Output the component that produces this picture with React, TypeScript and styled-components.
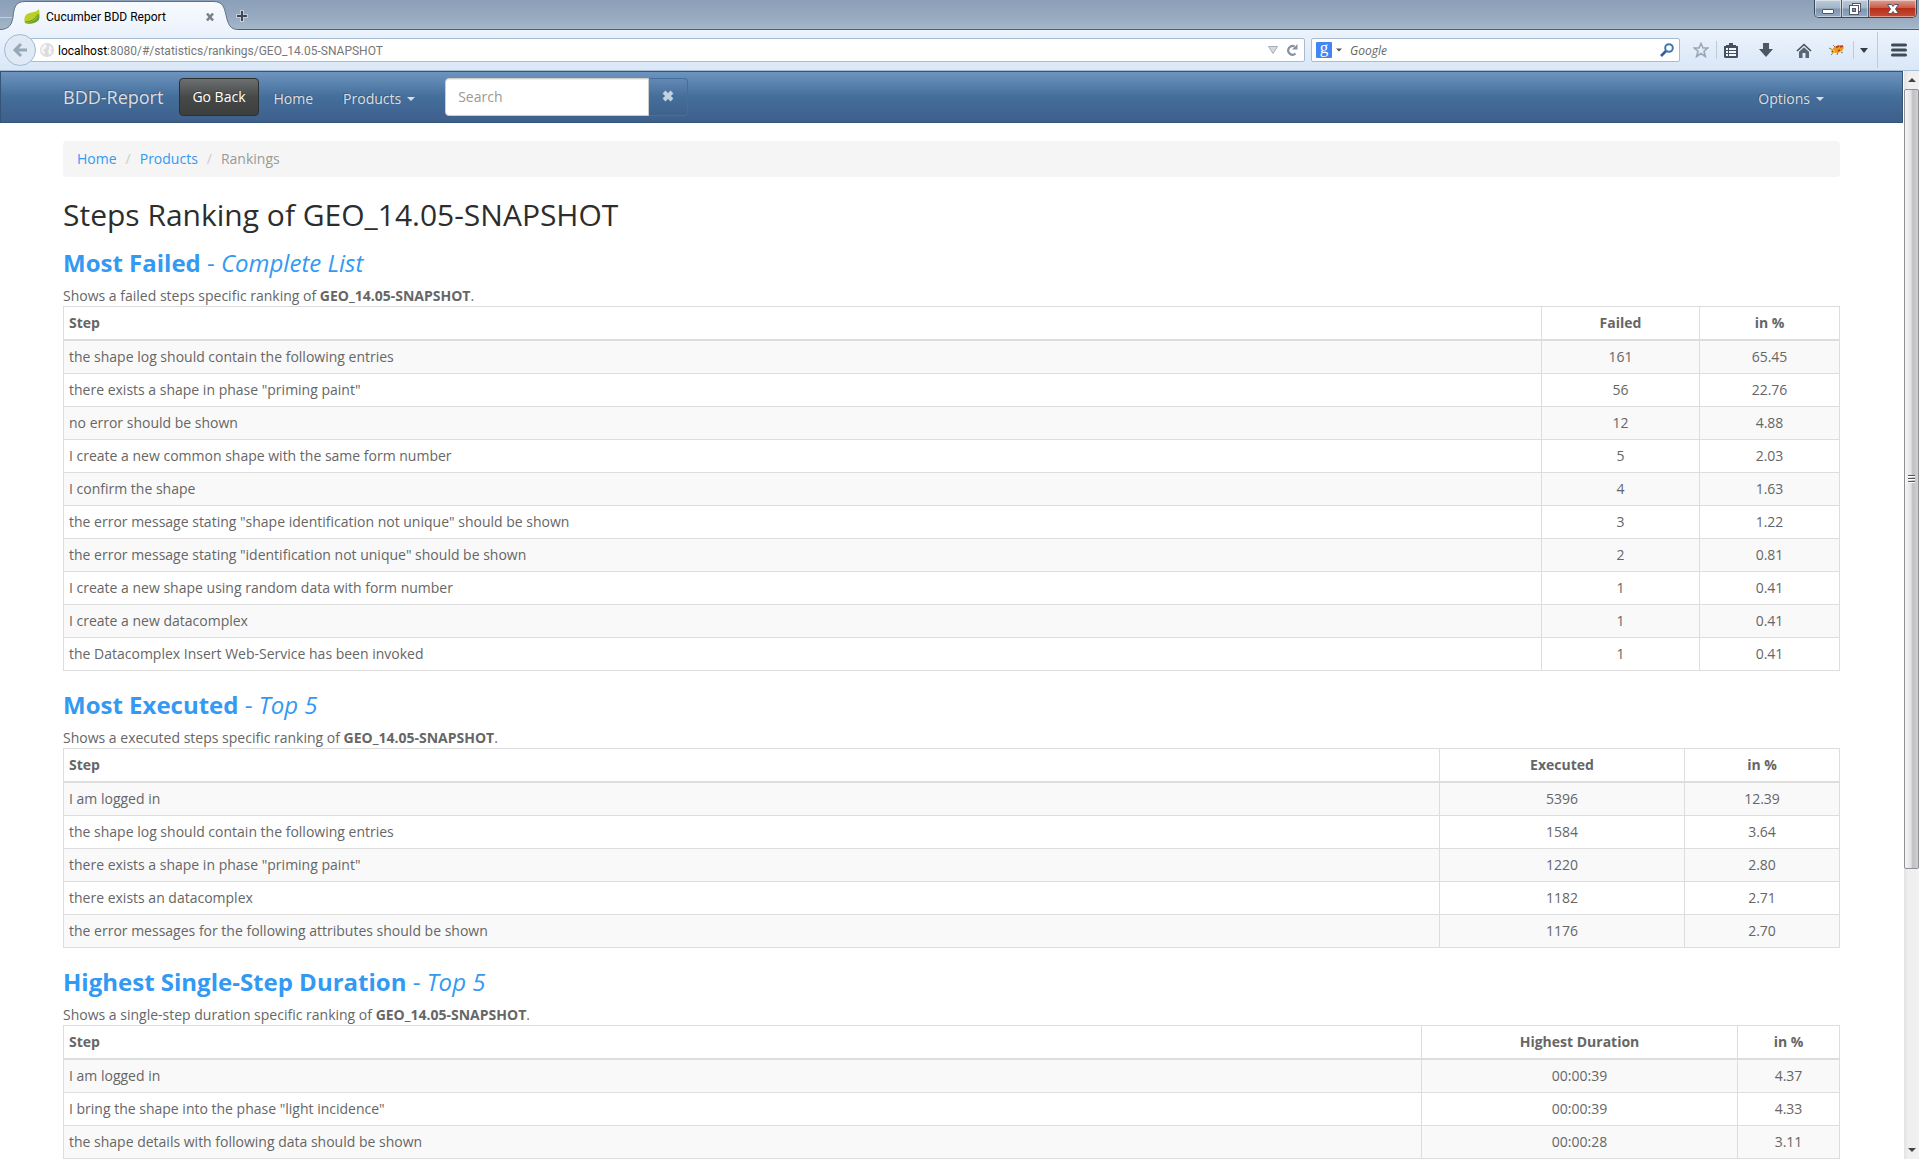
import React from 'react';
import styled, { createGlobalStyle, css } from 'styled-components';

const GlobalStyle = createGlobalStyle`
  *, *::before, *::after { box-sizing: border-box; }
  html, body, #root { height: 100%; }
  body {
    margin: 0;
    overflow: hidden;
    background: #fff;
    color: #666;
    font: 14px/20px "Open Sans", "Noto Sans", sans-serif;
  }
  button, input { font: inherit; margin: 0; }
  a { color: #3399f3; text-decoration: none; }
`;

const Window = styled.div`
  display: flex;
  flex-direction: column;
  height: 100vh;
`;

/* ---------- browser chrome ---------- */

const TitleBar = styled.header`
  display: flex;
  flex: none;
  align-items: flex-start;
  height: 30px;
  border-bottom: 1px solid #4c6274;
  background:
    radial-gradient(ellipse at 0 60%, #ccd9ea 0, rgba(204, 217, 234, 0) 60px),
    radial-gradient(ellipse at 100% 100%, #c3d6ea 0, rgba(195, 214, 234, 0) 50px),
    linear-gradient(#8b9fb9, #98aac0 60%, #a5b8c9);
`;

const Tab = styled.div`
  position: relative;
  display: flex;
  align-items: center;
  width: 236px;
  height: 30px;
  padding: 3px 21px 0 24px;
  color: #000;
  font: 12px/16px Roboto, "Open Sans", sans-serif;
`;

const TabShape = styled.svg`
  position: absolute;
  inset: 0;
`;

const TabIcon = styled.svg`
  position: relative;
  margin-right: 6px;
`;

const TabTitle = styled.span`
  position: relative;
  flex: 1;
  white-space: nowrap;
`;

const BareButton = styled.button`
  position: relative;
  display: flex;
  align-items: center;
  justify-content: center;
  padding: 0;
  border: 0;
  background: none;
  color: inherit;
`;

const NewTab = styled(BareButton)`
  width: 12px;
  height: 30px;
  padding-top: 2px;
`;

const WindowControls = styled.div`
  display: flex;
  height: 18px;
  margin-left: auto;
  margin-right: 2px;
  overflow: hidden;
  border: 1px solid #3a4858;
  border-top: 0;
  border-radius: 0 0 5px 5px;
`;

const ControlButton = styled(BareButton)<{ $close?: boolean }>`
  width: ${p => (p.$close ? 47 : 27)}px;
  height: 17px;
  box-shadow: inset 0 0 0 1px rgba(255, 255, 255, 0.45);
  background: linear-gradient(#bccada, #a3b5c9 48%, #7f95ae 52%, #94aac2);
  ${p =>
    p.$close
      ? css`background: linear-gradient(#dba094, #cc5c47 45%, #b5301a 50%, #c84c36);`
      : css`border-right: 1px solid #4a5a6c;`}
`;

const Toolbar = styled.div`
  display: flex;
  flex: none;
  align-items: center;
  height: 41px;
  padding: 0 0 0 4px;
  border-bottom: 1px solid #a8bdd2;
  background: linear-gradient(#ecf3fc, #d9e7f8);
  font-size: 12px;
  line-height: 16px;
`;

const BackButton = styled(BareButton)`
  z-index: 1;
  flex: none;
  width: 32px;
  height: 32px;
  border: 1px solid #a3bad0;
  border-radius: 50%;
  background: #dfeaf6;
`;

const Field = styled.div`
  display: flex;
  align-items: center;
  height: 24px;
  border: 1px solid #a9bccf;
  border-radius: 2px;
  background: #fff;
`;

const AddressField = styled(Field)`
  flex: 1;
  gap: 8px;
  margin-left: -6px;
  padding: 0 6px 0 9px;
`;

const Url = styled.span`
  flex: 1;
  margin-left: -4px;
  padding-top: 2px;
  color: #777;
  font-family: Roboto, "Open Sans", sans-serif;
  white-space: nowrap;
`;

const Host = styled.span`
  color: #000;
`;

const SearchField = styled(Field)`
  width: 369px;
  margin-left: 6px;
  padding: 0 5px 0 4px;
`;

const SearchBox = styled.input`
  flex: 1;
  min-width: 0;
  padding: 2px 8px 0;
  border: 0;
  outline: 0;
  background: none;
  color: #333;
  &::placeholder { color: #666; font-style: italic; opacity: 1; }
`;

const EngineBadge = styled.span`
  width: 16px;
  height: 16px;
  margin-right: 4px;
  border-radius: 1px;
  background: #4285f4;
  color: #fff;
  font: 17px/12px "Liberation Serif", serif;
  text-align: center;
`;

const Tools = styled.div`
  display: flex;
  align-items: center;
  height: 100%;
  margin-left: 13px;
`;

const Tool = styled(BareButton)<{ $w: number }>`
  width: ${p => p.$w}px;
  height: 24px;
`;

const ToolDivider = styled.span<{ $tall?: boolean; $gap?: number }>`
  width: 1px;
  height: ${p => (p.$tall ? 36 : 18)}px;
  margin-left: ${p => p.$gap ?? 0}px;
  background: #bccbdb;
`;

/* ---------- page ---------- */

const Viewport = styled.div`
  display: flex;
  flex: 1;
  min-height: 0;
`;

const Page = styled.div`
  flex: 1;
  min-width: 0;
  overflow: hidden;
`;

const Navbar = styled.nav`
  display: flex;
  align-items: center;
  height: 52px;
  margin-right: 1px;
  padding: 0 78px 0 62px;
  border: 1px solid #345578;
  background: linear-gradient(#6d94bf, #446e9b 50%, #3e5f8c);
  text-shadow: -1px -1px 0 rgba(0, 0, 0, 0.2);
`;

const Brand = styled.a`
  margin-right: 16px;
  color: #ddd;
  font-size: 18px;
`;

const GoBack = styled.button`
  height: 38px;
  padding: 0 12px;
  border: 1px solid #2e2f2f;
  border-radius: 4px;
  background: linear-gradient(#6d7070, #474949 50%, #3d3f3f);
  color: #fff;
  text-shadow: inherit;
`;

const NavLink = styled.a`
  display: flex;
  align-items: center;
  gap: 6px;
  padding: 3px 15px 0;
  color: #ddd;
`;

const NavEnd = styled.div`
  margin-left: auto;
  margin-right: -15px;
`;

const Caret = styled.span`
  border: 4px solid transparent;
  border-top-color: currentColor;
  border-bottom: 0;
`;

const SearchForm = styled.form`
  display: flex;
  height: 38px;
  margin: 0 0 0 15px;
`;

const SearchInput = styled.input`
  width: 204px;
  padding: 8px 12px;
  border: 1px solid #ccc;
  border-radius: 4px 0 0 4px;
  outline: 0;
  background: #fff;
  color: #666;
  box-shadow: inset 0 1px 1px rgba(0, 0, 0, 0.075);
  &::placeholder { color: #999; opacity: 1; }
`;

const ClearButton = styled(BareButton)`
  width: 39px;
  padding-bottom: 2px;
  border: 1px solid #446e9b;
  border-left: 0;
  border-radius: 0 4px 4px 0;
  background: linear-gradient(#6488b5, #446e9b 50%, #3e628c);
`;

const Content = styled.main`
  margin: 18px 64px 0 63px;
`;

const Breadcrumb = styled.ol`
  display: flex;
  margin: 0;
  padding: 8px 14px;
  border-radius: 4px;
  background: #f5f5f5;
  color: #999;
  list-style: none;
`;

const Crumb = styled.li`
  & + &::before {
    content: '/';
    padding: 0 9px;
    color: #ccc;
  }
`;

const PageTitle = styled.h1`
  margin: 21px 0 18px;
  color: #2d2d2d;
  font-size: 30px;
  font-weight: 400;
  line-height: 33px;
`;

const Ranking = styled.section`
  margin-bottom: 20px;
`;

const RankingTitle = styled.h2`
  margin: 0 0 9px;
  font-size: 24px;
  font-weight: 400;
  line-height: 28px;
`;

const Description = styled.p`
  margin: 0;
`;

const Table = styled.table`
  width: 100%;
  border: 1px solid #ddd;
  border-width: 1px 0 0 1px;
  border-spacing: 0;
  table-layout: fixed;
`;

const cell = css`
  padding: 6px 5px;
  border: 0 solid #ddd;
  border-width: 0 1px 1px 0;
  text-align: center;
  &:first-child { text-align: left; }
`;

const Th = styled.th`
  ${cell}
  border-bottom-width: 2px;
`;

const Td = styled.td`
  ${cell}
`;

const Row = styled.tr`
  &:nth-child(odd) { background: #f9f9f9; }
`;

const Col = styled.col<{ $w?: number }>`
  width: ${p => (p.$w ? `${p.$w}px` : 'auto')};
`;

/* ---------- scrollbar ---------- */

const Scrollbar = styled.div`
  display: flex;
  flex: none;
  flex-direction: column;
  width: 15px;
  background: linear-gradient(90deg, #e3e3e3, #efefef 30%, #f1f1f1);
`;

const ScrollArrow = styled(BareButton)`
  height: 18px;
  color: #444;
`;

const Thumb = styled.div`
  display: flex;
  flex: 779 1 0;
  align-items: center;
  justify-content: center;
  border: 1px solid #8f8f93;
  border-radius: 2px;
  background: linear-gradient(90deg, #f6f6f6, #e2e2e4 45%, #bfbfc3 60%, #d2d2d5);
`;

const TrackRest = styled.div`
  flex: 273 1 0;
`;

type RowData = [string, string, string];

interface RankingData {
  title: string;
  scope: string;
  kind: string;
  measure: string;
  widths: [number, number];
  rows: RowData[];
}

const RELEASE = 'GEO_14.05-SNAPSHOT';

const rankings: RankingData[] = [
  {
    title: 'Most Failed',
    scope: 'Complete List',
    kind: 'failed steps',
    measure: 'Failed',
    widths: [158, 140],
    rows: [
      ['the shape log should contain the following entries', '161', '65.45'],
      ['there exists a shape in phase "priming paint"', '56', '22.76'],
      ['no error should be shown', '12', '4.88'],
      ['I create a new common shape with the same form number', '5', '2.03'],
      ['I confirm the shape', '4', '1.63'],
      ['the error message stating "shape identification not unique" should be shown', '3', '1.22'],
      ['the error message stating "identification not unique" should be shown', '2', '0.81'],
      ['I create a new shape using random data with form number', '1', '0.41'],
      ['I create a new datacomplex', '1', '0.41'],
      ['the Datacomplex Insert Web-Service has been invoked', '1', '0.41'],
    ],
  },
  {
    title: 'Most Executed',
    scope: 'Top 5',
    kind: 'executed steps',
    measure: 'Executed',
    widths: [245, 155],
    rows: [
      ['I am logged in', '5396', '12.39'],
      ['the shape log should contain the following entries', '1584', '3.64'],
      ['there exists a shape in phase "priming paint"', '1220', '2.80'],
      ['there exists an datacomplex', '1182', '2.71'],
      ['the error messages for the following attributes should be shown', '1176', '2.70'],
    ],
  },
  {
    title: 'Highest Single-Step Duration',
    scope: 'Top 5',
    kind: 'single-step duration',
    measure: 'Highest Duration',
    widths: [316, 102],
    rows: [
      ['I am logged in', '00:00:39', '4.37'],
      ['I bring the shape into the phase "light incidence"', '00:00:39', '4.33'],
      ['the shape details with following data should be shown', '00:00:28', '3.11'],
    ],
  },
];

function RankingTable({ data }: { data: RankingData }) {
  return (
    <Ranking>
      <RankingTitle>
        <a href="#ranking">
          <strong>{data.title}</strong> - <em>{data.scope}</em>
        </a>
      </RankingTitle>
      <Description>
        Shows a {data.kind} specific ranking of <strong>{RELEASE}</strong>.
      </Description>
      <Table>
        <colgroup>
          <Col />
          <Col $w={data.widths[0]} />
          <Col $w={data.widths[1]} />
        </colgroup>
        <thead>
          <tr>
            <Th scope="col">Step</Th>
            <Th scope="col">{data.measure}</Th>
            <Th scope="col">in %</Th>
          </tr>
        </thead>
        <tbody>
          {data.rows.map(([step, value, share]) => (
            <Row key={step}>
              <Td>{step}</Td>
              <Td>{value}</Td>
              <Td>{share}</Td>
            </Row>
          ))}
        </tbody>
      </Table>
    </Ranking>
  );
}

function BrowserTitle() {
  return (
    <TitleBar>
      <Tab>
        <TabShape width="238" height="30" viewBox="0 0 238 30">
          <defs>
            <linearGradient id="tabFill" x1="0" y1="0" x2="0" y2="1">
              <stop offset="0" stopColor="#f8fbfe" />
              <stop offset="1" stopColor="#ecf3fc" />
            </linearGradient>
          </defs>
          <path
            d="M0 29.500C9 29.500 12 24 13 17C14 8 15 1.500 25 1.500H213C223 1.500 224 7 226 15C228 24 230 29.500 238 29.500V31H0Z"
            fill="url(#tabFill)"
          />
          <path
            d="M0 29.500C9 29.500 12 24 13 17C14 8 15 1.500 25 1.500H213C223 1.500 224 7 226 15C228 24 230 29.500 238 29.500"
            fill="none"
            stroke="#5d7186"
          />
        </TabShape>
        <TabIcon width="16" height="16" viewBox="0 0 16 16">
          <path d="M15 0C16 6 16 11 12 13C9 15 3 15 1 14C0 12 0 7 3 5C6 3 12 4 15 0Z" fill="#bccf26" />
          <path d="M1 14C7 14 12 11 15 5C16 10 15 12 12 13C9 15 4 15 1 14Z" fill="#6fa52c" />
          <path d="M1 13C7 13 11 10 14 5" fill="none" stroke="#59952b" />
        </TabIcon>
        <TabTitle>Cucumber BDD Report</TabTitle>
        <BareButton aria-label="Close tab">
          <svg width="10" height="10" viewBox="0 0 10 10">
            <path d="M2 1.500L8 8.500M8 1.500L2 8.500" stroke="#77808b" strokeWidth="2.600" />
          </svg>
        </BareButton>
      </Tab>
      <NewTab aria-label="New tab">
        <svg width="12" height="12" viewBox="0 0 12 12">
          <path d="M6 0V12M0 6H12" stroke="#eef4fa" strokeWidth="4" opacity="0.5" />
          <path d="M6 1V11M1 6H11" stroke="#3f4a55" strokeWidth="2" />
        </svg>
      </NewTab>
      <WindowControls>
        <ControlButton aria-label="Minimize">
          <svg width="14" height="14" viewBox="0 0 14 14">
            <rect x="1.500" y="7.500" width="11" height="4" rx="0.500" fill="#fff" stroke="#535666" />
          </svg>
        </ControlButton>
        <ControlButton aria-label="Restore">
          <svg width="14" height="14" viewBox="0 0 14 14">
            <rect x="4.500" y="1.500" width="8" height="8" fill="#fff" stroke="#535666" />
            <rect x="1.500" y="3.500" width="9" height="9" fill="#fff" stroke="#535666" />
            <rect x="4.500" y="6.500" width="3" height="3" fill="#8296ad" stroke="#535666" />
          </svg>
        </ControlButton>
        <ControlButton $close aria-label="Close">
          <svg width="14" height="12" viewBox="0 0 14 12">
            <path d="M1.500 1.500H5.500L7 3.500L8.500 1.500H12.500L9.500 6L12.500 10.500H8.500L7 8.500L5.500 10.500H1.500L4.500 6Z" fill="#fff" stroke="#535666" />
          </svg>
        </ControlButton>
      </WindowControls>
    </TitleBar>
  );
}

function BrowserToolbar() {
  return (
    <Toolbar>
      <BackButton aria-label="Back">
        <svg width="16" height="16" viewBox="0 0 16 16">
          <path d="M15 8H3M9 2L3 8L9 14" fill="none" stroke="#98a7b6" strokeWidth="3" />
        </svg>
      </BackButton>
      <AddressField>
        <svg width="14" height="14" viewBox="0 0 14 14">
          <circle cx="7" cy="7" r="7" fill="#dcdcdc" />
          <path d="M2 4L5 1L7 3L5 6L3 7L5 9L4 12L1 8ZM9 2L12 5L11 8L12 10L9 12L8 8L9 6Z" fill="#f6f6f6" />
        </svg>
        <Url>
          <Host>localhost</Host>:8080/#/statistics/rankings/{RELEASE}
        </Url>
        <svg width="10" height="8" viewBox="0 0 10 8">
          <path d="M0.500 0.500H9.500L5 7.500Z" fill="#d5dae0" stroke="#a4afbb" />
        </svg>
        <BareButton aria-label="Reload">
          <svg width="12" height="12" viewBox="0 0 12 12">
            <path d="M8.500 2.500A4.300 4.300 0 1 0 9.500 9.500" fill="none" stroke="#8492a1" strokeWidth="2.200" />
            <path d="M11.500 0V5.500H6Z" fill="#8492a1" />
          </svg>
        </BareButton>
      </AddressField>
      <SearchField>
        <EngineBadge>g</EngineBadge>
        <svg width="6" height="4" viewBox="0 0 6 4">
          <path d="M0 0.500H6L3 3.500Z" fill="#555" />
        </svg>
        <SearchBox aria-label="Web search" placeholder="Google" />
        <svg width="14" height="14" viewBox="0 0 14 14">
          <circle cx="9" cy="5" r="3.800" fill="none" stroke="#3c79b4" strokeWidth="2" />
          <path d="M6 8L1 13" stroke="#2f619c" strokeWidth="2.600" />
        </svg>
      </SearchField>
      <Tools>
        <Tool $w={16} aria-label="Bookmark">
          <svg width="16" height="16" viewBox="0 0 16 16">
            <path
              d="M8 1.500L10 6H14.800L11 9.200L12.400 14.500L8 11.500L3.600 14.500L5 9.200L1.200 6H6Z"
              fill="none"
              stroke="#9ba7b4"
              strokeWidth="1.600"
            />
          </svg>
        </Tool>
        <ToolDivider $gap={7} />
        <Tool $w={28} aria-label="Bookmarks list">
          <svg width="14" height="15" viewBox="0 0 14 15">
            <path d="M5 0H9V2H12V3H14V14L13 15H1L0 14V3H2V2H5Z" fill="#45515e" />
            <path d="M2 5H12V13H2Z" fill="#f2f7fc" />
            <path d="M2 7.500H12M2 10.500H12M4.500 5V13" stroke="#45515e" />
          </svg>
        </Tool>
        <Tool $w={41} aria-label="Downloads">
          <svg width="14" height="14" viewBox="0 0 14 14">
            <path d="M4 0H10V6H14L7 14L0 6H4Z" fill="#4c5865" />
          </svg>
        </Tool>
        <Tool $w={35} aria-label="Home page">
          <svg width="16" height="15" viewBox="0 0 16 15">
            <path d="M1 8L8 1.500L15 8" fill="none" stroke="#45515e" strokeWidth="1.600" />
            <path d="M3 8.800L8 4.300L13 8.800V15H9.500V10H6.500V15H3Z" fill="#5a6673" />
          </svg>
        </Tool>
        <Tool $w={32} aria-label="Firebug">
          <svg width="16" height="12" viewBox="0 0 16 12">
            <path d="M0 4L4 6M2 11L5 8M8 11L9 8M12 9L14 8M4 1L7 4" stroke="#8d7a5c" />
            <ellipse cx="9" cy="5" rx="6" ry="3.500" transform="rotate(-22 9 5)" fill="#f0981a" />
            <path d="M7 3.500L10 2M11 3L14 2M9 7L11 6" stroke="#b63c14" strokeWidth="1.400" />
            <circle cx="4" cy="7.500" r="2" fill="#f8c23c" />
            <circle cx="3.500" cy="7.500" r="0.800" fill="#5a3a16" />
          </svg>
        </Tool>
        <ToolDivider />
        <Tool $w={20} aria-label="More">
          <svg width="8" height="5" viewBox="0 0 8 5">
            <path d="M0 0H8L4 5Z" fill="#333d47" />
          </svg>
        </Tool>
        <ToolDivider $tall $gap={3} />
        <Tool $w={41} aria-label="Menu">
          <svg width="16" height="14" viewBox="0 0 16 14">
            <path d="M1.500 2H14.500M1.500 7H14.500M1.500 12H14.500" stroke="#3f4b57" strokeWidth="3" strokeLinecap="round" />
          </svg>
        </Tool>
      </Tools>
    </Toolbar>
  );
}

export default function App() {
  return (
    <Window>
      <GlobalStyle />
      <BrowserTitle />
      <BrowserToolbar />
      <Viewport>
        <Page>
          <Navbar>
            <Brand href="#/">BDD-Report</Brand>
            <GoBack type="button">Go Back</GoBack>
            <NavLink href="#/">Home</NavLink>
            <NavLink href="#/products">
              Products <Caret />
            </NavLink>
            <SearchForm>
              <SearchInput aria-label="Search" placeholder="Search" />
              <ClearButton type="button" aria-label="Clear search">
                <svg width="12" height="12" viewBox="0 0 12 12">
                  <path d="M2 2L10 10M10 2L2 10" stroke="#c4d2e0" strokeWidth="4" />
                </svg>
              </ClearButton>
            </SearchForm>
            <NavEnd>
              <NavLink href="#/options">
                Options <Caret />
              </NavLink>
            </NavEnd>
          </Navbar>
          <Content>
            <Breadcrumb>
              <Crumb>
                <a href="#/">Home</a>
              </Crumb>
              <Crumb>
                <a href="#/products">Products</a>
              </Crumb>
              <Crumb>Rankings</Crumb>
            </Breadcrumb>
            <PageTitle>Steps Ranking of {RELEASE}</PageTitle>
            {rankings.map(data => (
              <RankingTable key={data.title} data={data} />
            ))}
          </Content>
        </Page>
        <Scrollbar>
          <ScrollArrow aria-label="Scroll up">
            <svg width="8" height="4" viewBox="0 0 8 4">
              <path d="M0 4H8L4 0Z" fill="currentColor" />
            </svg>
          </ScrollArrow>
          <Thumb>
            <svg width="7" height="8" viewBox="0 0 7 8">
              <path d="M0 0.500H7M0 3.500H7M0 6.500H7" stroke="#555" />
              <path d="M0 1.500H7M0 4.500H7M0 7.500H7" stroke="#fff" />
            </svg>
          </Thumb>
          <TrackRest />
          <ScrollArrow aria-label="Scroll down">
            <svg width="8" height="4" viewBox="0 0 8 4">
              <path d="M0 0H8L4 4Z" fill="currentColor" />
            </svg>
          </ScrollArrow>
        </Scrollbar>
      </Viewport>
    </Window>
  );
}
